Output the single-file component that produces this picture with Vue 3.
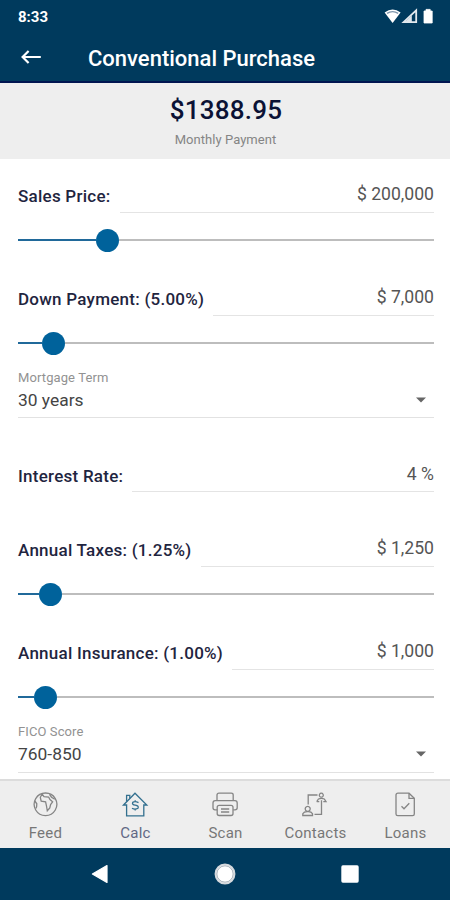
<template>
  <div class="phone">
    <div class="status-bar">
      <span class="clock">8:33</span>
      <svg class="status-icons" width="50" height="18" viewBox="0 0 50 18">
        <path d="M0.6 4.6 Q8.6 -1.8 16.6 4.6 L8.6 15 Z" fill="#fff" />
        <path d="M3 5.4 Q8.6 1.8 14.2 5.4" fill="none" stroke="#7d95ab" stroke-width="1.3" />
        <path d="M19.6 14.2 L32.2 2.4 V14.2 Z" fill="none" stroke="#e3e9ee" stroke-width="1.8" />
        <path d="M20 14.6 L27.8 7.4 V14.6 Z" fill="#dfe6ec" />
        <path d="M40 3 h2 v-1.6 h4.2 v1.6 h2 v12 h-8.2 z" fill="#fff" stroke="#fff" stroke-width="0.8" stroke-linejoin="round" />
      </svg>
    </div>

    <div class="toolbar">
      <svg class="back" width="22" height="16" viewBox="0 0 22 16">
        <path d="M20.8 8 H2.6 M8.6 2 L2.6 8 L8.6 14" fill="none" stroke="#fff" stroke-width="2.2" />
      </svg>
      <span class="title">Conventional Purchase</span>
    </div>

    <div class="summary">
      <div class="amount">$1388.95</div>
      <div class="caption">Monthly Payment</div>
    </div>

    <div class="content">
      <template v-for="field in fields" :key="field.label">
        <div v-if="field.type === 'select'" class="select">
          <div class="select-label">{{ field.label }}</div>
          <div class="select-value">
            <span>{{ field.value }}</span>
            <svg width="10" height="6" viewBox="0 0 10 6"><path d="M0 0.5 H10 L5 5.5 Z" fill="#666" /></svg>
          </div>
        </div>
        <div v-else class="field" :class="field.type">
          <div class="row">
            <span class="label">{{ field.label }}</span>
            <span class="value">{{ field.value }}</span>
          </div>
          <div v-if="field.type === 'range'" class="slider">
            <div class="filled" :style="{ width: field.position + '%' }"></div>
            <div class="thumb"></div>
            <div class="track"></div>
          </div>
        </div>
      </template>
    </div>

    <div class="tabs">
      <div v-for="tab in tabs" :key="tab.name" class="tab" :class="{ active: tab.active }">
        <svg class="tab-icon" width="28" height="26" viewBox="0 0 28 26">
          <path v-for="(d, i) in tab.paths" :key="i" :d="d" />
        </svg>
        <span class="tab-name">{{ tab.name }}</span>
      </div>
    </div>

    <div class="nav-bar">
      <svg width="20" height="22" viewBox="0 0 20 22">
        <path d="M2.4 11 L17 2.6 V19.4 Z" fill="#fff" stroke="#fff" stroke-width="1.2" stroke-linejoin="round" />
      </svg>
      <svg width="22" height="22" viewBox="0 0 22 22">
        <circle cx="11" cy="11" r="9.7" fill="#fff" stroke="#d5d9dd" stroke-width="1.5" />
        <circle cx="11" cy="11" r="8.2" fill="none" stroke="#9aa3ad" stroke-width="0.9" />
      </svg>
      <svg width="20" height="20" viewBox="0 0 20 20">
        <rect x="1.3" y="1.3" width="17.4" height="17.4" rx="1.6" fill="#fff" />
      </svg>
    </div>
  </div>
</template>

<script setup>
import { ref } from 'vue'

// position is the slider fill in percent, up to the thumb's left edge
const fields = ref([
  { type: 'range', label: 'Sales Price:', value: '$ 200,000', position: 18.75 },
  { type: 'range', label: 'Down Payment: (5.00%)', value: '$ 7,000', position: 5.75 },
  { type: 'select', label: 'Mortgage Term', value: '30 years' },
  { type: 'plain', label: 'Interest Rate:', value: '4 %' },
  { type: 'range', label: 'Annual Taxes: (1.25%)', value: '$ 1,250', position: 4.95 },
  { type: 'range', label: 'Annual Insurance: (1.00%)', value: '$ 1,000', position: 3.75 },
  { type: 'select', label: 'FICO Score', value: '760-850' }
])

const tabs = ref([
  {
    name: 'Feed',
    paths: [
      'M14.5 2 a11.3 11.3 0 1 0 0.01 0 z',
      'M11 3 L9.3 6.5 L10.2 10.2 L14.6 10.8 L15.4 14.5 L16.3 19.8 L18.8 17 L19.6 13.5 L21.6 10.8 L19 8.6 L17.6 6 L13 5.6 L11 3',
      'M3.8 10 L5.8 12.8 L5.6 15.8 L4.8 17.6',
      'M18.5 3.3 L20.5 6.2 L23.8 8.2'
    ]
  },
  {
    name: 'Calc',
    active: true,
    paths: [
      'M2.5 14 L14 2.2 L25.8 14 H22.8 V24.8 H5.6 V14 Z',
      'M5.6 10.5 V4.3 H8.8 V7.2',
      'M17.5 11.6 Q14 9.9 11.7 11.4 Q10.7 13.6 14.3 14.2 Q18.2 14.9 17 17.2 Q14 19 11 17.2 M14.2 9.2 V10.6 M14.2 18.1 V19.6'
    ]
  },
  {
    name: 'Scan',
    paths: [
      'M6 9.5 V4 Q6 2.2 8 2.2 H20.2 Q22.2 2.2 22.2 4 V9.5',
      'M6.2 18.8 H4 Q2 18.8 2 16.8 V12 Q2 9.7 4.2 9.7 H24 Q26.2 9.7 26.2 12 V16.8 Q26.2 18.8 24 18.8 H22.2',
      'M8.2 14.3 H20 Q22 14.3 22 16.3 V22.5 Q22 24.5 20 24.5 H8.2 Q6.2 24.5 6.2 22.5 V16.3 Q6.2 14.3 8.2 14.3 Z',
      'M10 18 H18.2 M10 21 H18.2'
    ]
  },
  {
    name: 'Contacts',
    paths: [
      'M7.2 13.5 V4 H16.5',
      'M13.5 23.3 H20.5 V9.2',
      'M6.7 15.3 a2.5 2.5 0 1 0 0.01 0 z',
      'M1.8 24.5 V22.7 Q3 20.4 6.7 20.6 Q10.4 20.4 11.5 22.7 V24.5 Z',
      'M20.3 2.2 a2 2 0 1 0 0.01 0 z',
      'M15.7 10.7 L17.5 8 Q20.5 6.6 23.3 8 L25 10.7 H22.3 M15.7 10.7 H18.3'
    ]
  },
  {
    name: 'Loans',
    paths: [
      'M7 2.2 H18 L23.3 7.3 V23 Q23.3 24.7 21.6 24.7 H6.8 Q5 24.7 5 23 V4 Q5 2.2 7 2.2 Z',
      'M18 2.2 V7.3 H23.3',
      'M10.5 15.3 L13 17.8 L18.3 12.2'
    ]
  }
])
</script>

<style>
body {
  margin: 0;
}
</style>

<style scoped>
.phone {
  display: flex;
  flex-direction: column;
  width: 450px;
  height: 900px;
  overflow: hidden;
  background: #fff;
  font-family: Roboto, 'Liberation Sans', sans-serif;
}

.status-bar {
  display: flex;
  justify-content: space-between;
  align-items: center;
  box-sizing: border-box;
  height: 33px;
  padding: 0 16px 0 18px;
  background: #003a5d;
}

.clock {
  color: #fff;
  font-size: 15px;
  font-weight: 700;
}

.toolbar {
  display: flex;
  align-items: center;
  box-sizing: border-box;
  height: 50px;
  padding-left: 20px;
  border-bottom: 2px solid #001550;
  background: #003a5d;
}

.title {
  padding-top: 2px;
  margin-left: 46px;
  color: #fff;
  font-size: 22px;
  font-weight: 500;
}

.summary {
  box-sizing: border-box;
  height: 76px;
  padding-top: 11px;
  background: #eee;
  text-align: center;
}

.amount {
  padding-left: 2px;
  color: #0b1235;
  font-size: 26px;
  font-weight: 500;
  line-height: 32px;
  letter-spacing: 0.25px;
}

.caption {
  padding-left: 1px;
  margin-top: 5px;
  color: #858585;
  font-size: 13px;
  line-height: 18px;
  letter-spacing: 0.05px;
}

.content {
  flex: 1;
  min-height: 0;
  padding: 5px 16px 0 18px;
  overflow: hidden;
}

.row {
  display: flex;
  height: 49px;
}

.label {
  padding-top: 22px;
  margin-right: 9px;
  color: #1f2540;
  font-size: 17px;
  font-weight: 500;
  line-height: 20px;
  letter-spacing: 0.25px;
  white-space: nowrap;
}

.value {
  flex: 1;
  box-sizing: border-box;
  padding-top: 20px;
  border-bottom: 1px solid #e4e4e4;
  color: #555;
  font-size: 17.6px;
  line-height: 20px;
  text-align: right;
}

.slider {
  display: flex;
  align-items: center;
  height: 54px;
}

.filled {
  height: 2px;
  background: #20699a;
}

.thumb {
  width: 23px;
  height: 23px;
  border-radius: 50%;
  background: #00629b;
}

.track {
  flex: 1;
  height: 2px;
  background: #bdbdbd;
}

.select {
  box-sizing: border-box;
  height: 48px;
  border-bottom: 1px solid #e2e2e2;
}

.select:last-child {
  height: 49px;
}

.select-label {
  color: #929292;
  font-size: 13px;
  line-height: 16px;
  letter-spacing: 0.1px;
}

.select-value {
  display: flex;
  justify-content: space-between;
  align-items: center;
  height: 28px;
  padding-right: 8px;
  color: #444;
  font-size: 17.4px;
}

.plain {
  margin: 25px 0 26px;
}

.plain .label,
.plain .value {
  position: relative;
}

.plain .label {
  padding-top: 23px;
}

.plain .value {
  padding-top: 21px;
}

.tabs {
  display: flex;
  box-sizing: border-box;
  height: 69px;
  border-top: 2px solid #dcdcdc;
  background: #eee;
}

.tab {
  flex: 1;
  display: flex;
  flex-direction: column;
  align-items: center;
  padding-top: 10px;
  color: #777;
}

.tab-icon {
  fill: none;
  stroke: #858585;
  stroke-width: 1.3;
}

.tab.active {
  color: #616885;
}

.tab.active .tab-icon {
  stroke: #33708f;
}

.tab-name {
  margin-top: 7px;
  margin-left: 1px;
  font-size: 15px;
  line-height: 18px;
  letter-spacing: 0.25px;
}

.nav-bar {
  display: flex;
  justify-content: space-between;
  align-items: center;
  box-sizing: border-box;
  height: 52px;
  padding: 0 90px;
  background: #003a5d;
}
</style>
